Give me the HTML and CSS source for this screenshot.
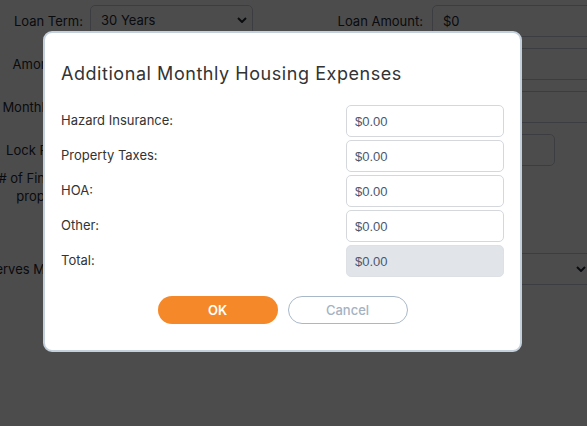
FILE: index.html
```html
<!DOCTYPE html>
<html>
<head>
<meta charset="utf-8">
<link rel="stylesheet" href="styles.css">
</head>
<body>
<div class="page">
  <div class="col col-left">
    <div class="row"><span class="lbl">Loan Term:</span><div class="field select"><span>30 Years</span><svg class="chev" viewBox="0 0 10 6" width="10" height="6"><path d="M1 1l4 4 4-4" fill="none" stroke="#1f2933" stroke-width="2"/></svg></div></div>
    <div class="row"><span class="lbl">Amortizing:</span><div class="field"></div></div>
    <div class="row"><span class="lbl">Monthly PMI:</span><div class="field"></div></div>
    <div class="row"><span class="lbl">Lock Period:</span><div class="field"></div></div>
    <div class="row row-tall"><span class="lbl two">#&nbsp;of&nbsp;Financed<br>properties:</span><div class="field"></div></div>
    <div class="row"><span class="lbl">Reserves Months:</span><div class="field"></div></div>
  </div>
  <div class="col col-right">
    <div class="row"><span class="lbl">Loan Amount:</span><div class="field"><span>$0</span></div></div>
    <div class="row"><span class="lbl">Interest Rate:</span><div class="field"></div></div>
    <div class="row"><span class="lbl">Loan Purpose:</span><div class="field"></div></div>
    <div class="row"><span class="lbl">Credit Score:</span><div class="field short"></div></div>
    <div class="row row-tall"></div>
    <div class="row"><span class="lbl">Occupancy:</span><div class="field select"><span></span><svg class="chev" viewBox="0 0 10 6" width="10" height="6"><path d="M1 1l4 4 4-4" fill="none" stroke="#1f2933" stroke-width="2"/></svg></div></div>
  </div>
</div>
<div class="overlay"></div>
<div class="modal">
  <h2 class="title">Additional Monthly Housing Expenses</h2>
  <div class="rows">
    <div class="mrow"><span class="mlbl">Hazard Insurance:</span><div class="minput">$0.00</div></div>
    <div class="mrow"><span class="mlbl">Property Taxes:</span><div class="minput">$0.00</div></div>
    <div class="mrow"><span class="mlbl">HOA:</span><div class="minput">$0.00</div></div>
    <div class="mrow"><span class="mlbl">Other:</span><div class="minput">$0.00</div></div>
    <div class="mrow"><span class="mlbl">Total:</span><div class="minput total">$0.00</div></div>
  </div>
  <div class="buttons">
    <button class="btn ok">OK</button>
    <button class="btn cancel">Cancel</button>
  </div>
</div>
</body>
</html>
```
FILE: styles.css
```css
html, body {
  margin: 0;
  padding: 0;
  background: #ffffff;
  width: 587px;
  height: 426px;
  overflow: hidden;
  font-family: Inter, "Noto Sans", sans-serif;
}
.page {
  display: flex;
  padding-top: 5px;
}
.col {
  display: flex;
  flex-direction: column;
  gap: 11px;
  flex: none;
}
.col-left { width: 253px; }
.col-right { margin-left: 84px; width: 255px; }
.row {
  display: flex;
  align-items: center;
  height: 32px;
}
.row-tall { height: 65px; align-items: flex-start; }
.lbl {
  display: flex;
  justify-content: flex-end;
  white-space: nowrap;
  font-size: 13px;
  color: #1f2832;
  flex: none;
}
.lbl.two { text-align: right; line-height: 18px; margin-top: -8px; }
.col-left .lbl { width: 83px; margin-right: 7px; }
.col-right .lbl { width: 86px; margin-right: 9px; }
.field {
  box-sizing: border-box;
  height: 32px;
  flex: 1;
  border: 1px solid #c9ced6;
  border-radius: 5px;
  display: flex;
  align-items: center;
  padding: 0 10px;
  font-size: 13px;
  color: #1f2832;
}
.field.short { flex: none; width: 123px; }
.field.select { justify-content: space-between; padding-right: 5px; }
.col-left .field.select { height: 30px; margin-top: -3px; }
.overlay {
  position: fixed;
  inset: 0;
  background: rgba(0, 0, 0, 0.7);
}
.modal {
  position: absolute;
  left: 43px;
  top: 31px;
  width: 479px;
  height: 321px;
  box-sizing: border-box;
  background: #ffffff;
  border: 2px solid #c3cfdb;
  border-radius: 9px;
  padding: 16px;
  display: flex;
  flex-direction: column;
}
.title {
  margin: 14px 0 0 0;
  font-size: 18px;
  line-height: 22px;
  font-weight: 400;
  letter-spacing: 0.55px;
  color: #333333;
}
.rows {
  display: flex;
  flex-direction: column;
  gap: 3px;
  margin-top: 20px;
}
.mrow {
  display: flex;
  align-items: center;
  justify-content: space-between;
  height: 32px;
}
.mlbl {
  font-size: 13px;
  color: #333333;
  margin-top: -3px;
}
.minput {
  box-sizing: border-box;
  width: 158px;
  height: 32px;
  border: 1px solid #d4d8dd;
  border-radius: 5px;
  padding: 0 8px;
  display: flex;
  align-items: center;
  font-family: "Liberation Sans", Arial, sans-serif;
  font-size: 13px;
  color: #4a5870;
}
.minput.total {
  background: #e1e5ea;
  border-color: #dde1e6;
}
.buttons {
  display: flex;
  justify-content: center;
  gap: 10px;
  margin-top: 19px;
}
.btn {
  box-sizing: border-box;
  width: 120px;
  height: 28px;
  border-radius: 14px;
  font-family: Inter, "Noto Sans", sans-serif;
  font-size: 13px;
  cursor: pointer;
}
.ok {
  background: #f5892a;
  border: none;
  color: #ffffff;
  font-weight: 600;
}
.cancel {
  background: #ffffff;
  border: 1px solid #a9b8c8;
  color: #a5b2c2;
  font-weight: 500;
}
```
